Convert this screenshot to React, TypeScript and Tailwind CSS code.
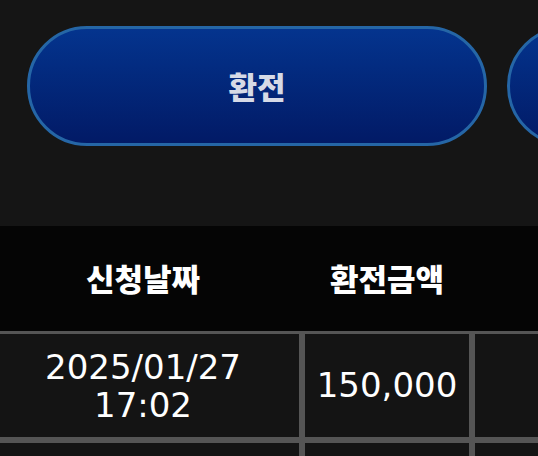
const rows = [
  { date: '2025/01/27', time: '17:02', amount: '150,000', status: '완료' },
  { date: '2025/01/26', time: '14:20', amount: '100,000', status: '완료' },
]

const font = { fontFamily: '"Noto Sans CJK KR", "Noto Sans", sans-serif' }
const numFont = { fontFamily: '"DejaVu Sans", "Noto Sans CJK KR", sans-serif' }

export default function App() {
  return (
    <div className="h-screen overflow-hidden bg-[#151515] text-white" style={font}>
      <div className="flex gap-5 pl-[27px] pt-[26px]">
        <button className="flex h-[120px] w-[460px] shrink-0 items-center justify-center rounded-full border-[3px] border-[#2566a6] bg-gradient-to-b from-[#04348e] to-[#021a66] text-[31px] font-black text-[#d6dae6]">
          환전
        </button>
        <button className="flex h-[120px] w-[460px] shrink-0 items-center justify-center rounded-full border-[3px] border-[#2566a6] bg-gradient-to-b from-[#04348e] to-[#021a66] text-[31px] font-black text-[#d6dae6]">
          내역
        </button>
      </div>

      <div className="mt-[80px] -ml-4 w-[800px]">
        <div className="flex h-[105px] items-center bg-[#050505] text-[31px] font-black">
          <div className="w-[318px] text-center">신청날짜</div>
          <div className="w-[170px] text-center">환전금액</div>
          <div className="w-[200px] pl-[80px] text-center">상태</div>
        </div>
        {rows.map((r) => (
          <div key={r.date + r.time} className="flex">
            <div className="flex h-[109px] w-[318px] flex-col items-center justify-center border-[3px] border-[#555555] bg-[#141414] text-[34px] leading-[38px]" style={numFont}>
              <span>{r.date}</span>
              <span>{r.time}</span>
            </div>
            <div className="flex h-[109px] w-[170px] items-center justify-center border-[3px] border-[#555555] bg-[#141414] text-[34px]" style={numFont}>
              {r.amount}
            </div>
            <div className="flex h-[109px] w-[200px] items-center justify-center border-[3px] border-[#555555] bg-[#141414] pl-[80px] text-[31px] font-black">
              {r.status}
            </div>
          </div>
        ))}
      </div>
    </div>
  )
}
